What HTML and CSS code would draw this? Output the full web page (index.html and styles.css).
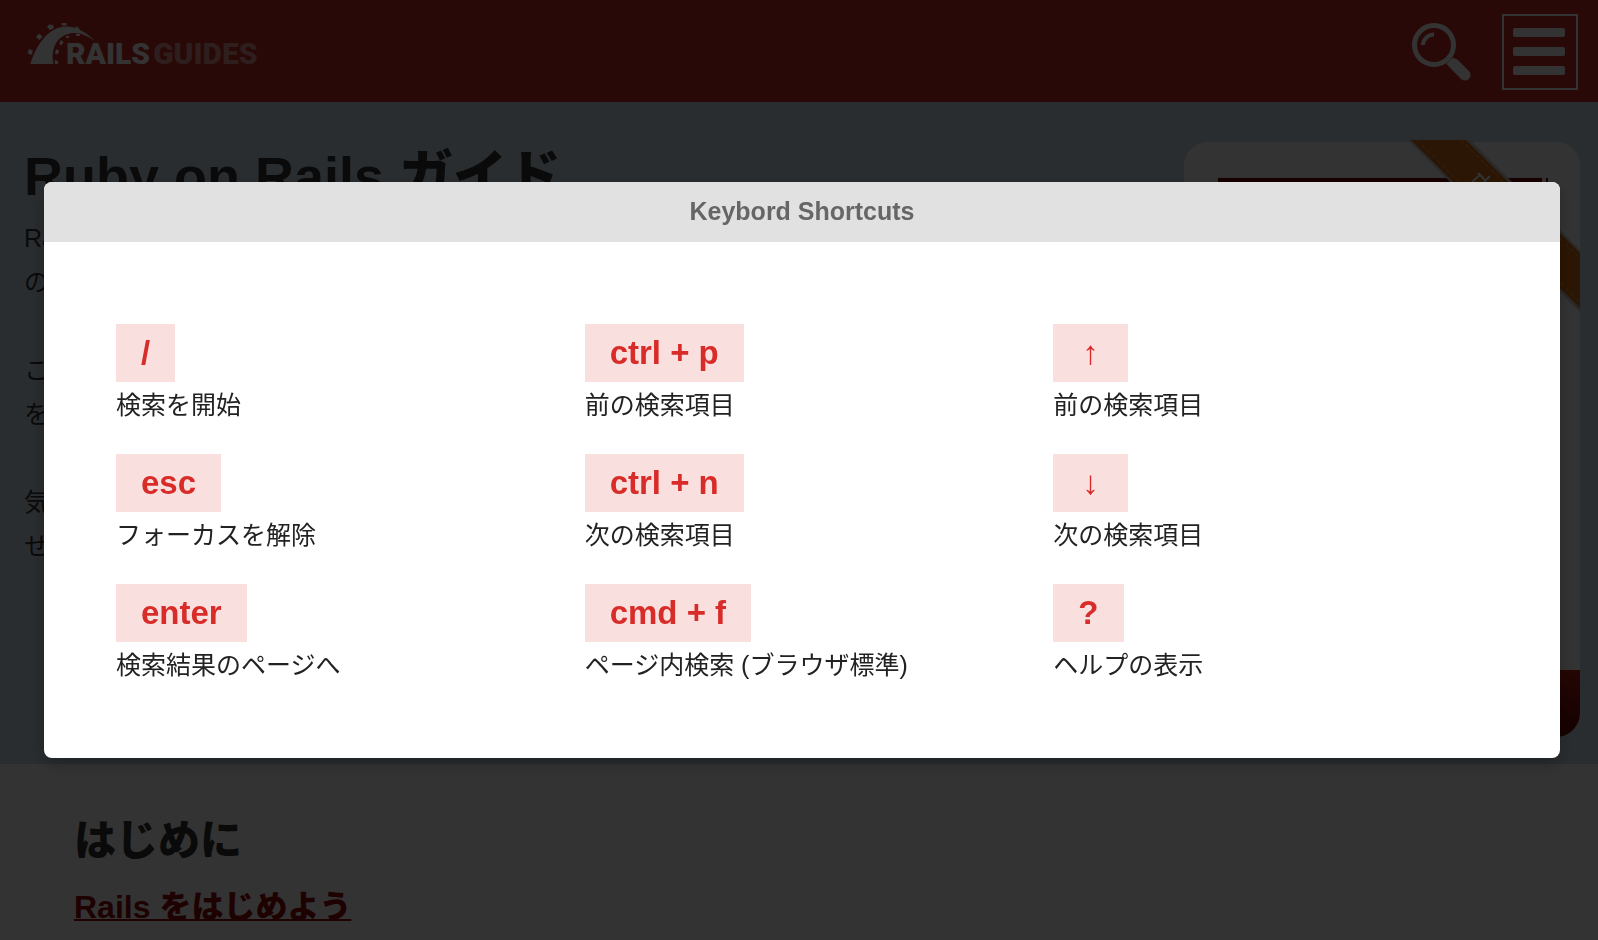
FILE: index.html
```html
<!DOCTYPE html>
<html lang="ja">
<head>
<meta charset="utf-8">
<meta name="viewport" content="width=device-width, initial-scale=1">
<title>Ruby on Rails ガイド</title>
<link rel="stylesheet" href="styles.css">
</head>
<body>
<header class="site-header">
  <a class="logo" href="#" aria-label="Rails Guides">
    <svg class="logo-mark" viewBox="0 0 72 44" aria-hidden="true">
      <path d="M2.500 42C7 25 20 4.500 38 4.500C50 4.500 60 12 67 19C60 14 52 10.500 45 11C31 12 22 24 25.500 42Z"/>
      <path d="M1 27l4 1.500l-1.500 4.500l-4-1.500zM11 11.500l3.500 3l-3 3.500l-3.500-3zM21 2.500l4 .5l1 3l-4 2l-3-3zM34 1h4.500v2.500h-5zM48 4l4 3l-1.500 1.500l-3-2.500zM48 12h4v2h-4zM39 13.500l2.500 1l-1.500 2l-2.500-1.500zM33 18l2.500 2l-2 3.500l-2.500-2zM28 27l3.500 2l-2 3.500l-2.500-1zM26.500 38l3.500 1v3h-3z"/>
    </svg>
    <span class="logo-rails">RAILS</span><span class="logo-guides">GUIDES</span>
  </a>
  <div class="header-tools">
    <button class="search-button" type="button" aria-label="検索">
      <svg viewBox="0 0 60 60" aria-hidden="true">
        <circle cx="23" cy="23" r="19.500"/>
        <path class="glint" d="M12 23A11 11 0 0 1 23 12.500"/>
        <path class="handle" d="M43 42L54 53"/>
        <path d="M37 43.500L44 37"/>
      </svg>
    </button>
    <button class="menu-button" type="button" aria-label="メニュー">
      <span></span><span></span><span></span>
    </button>
  </div>
</header>

<section class="feature">
  <div class="intro">
    <h1>Ruby on Rails ガイド</h1>
    <p>Ra<br>の</p>
    <p>こ<br>を</p>
    <p>気<br>せ</p>
  </div>
  <div class="book" aria-hidden="true">
    <svg class="ribbon" viewBox="0 0 172 172">
      <path class="ribbon-shade" d="M0 0H62L172 110V172Z"/>
      <path class="ribbon-band" d="M3 0H58L172 113V168Z"/>
      <path class="ribbon-stitch" d="M9 0L172 162M53 0L172 118"/>
      <path class="ribbon-print" d="M64 42l9-8M70 33l8 8M76 42l6-6"/>
    </svg>
    <div class="book-cover"><span></span><span></span></div>
    <div class="book-foot"></div>
  </div>
</section>

<main class="chapters">
  <h2>はじめに</h2>
  <a href="#">Rails をはじめよう</a>
</main>

<div class="overlay">
  <div class="dialog" role="dialog" aria-modal="true" aria-labelledby="dialog-title">
    <h2 class="dialog-title" id="dialog-title">Keybord Shortcuts</h2>
    <div class="shortcuts">
      <div class="shortcut"><kbd>/</kbd><p>検索を開始</p></div>
      <div class="shortcut"><kbd>ctrl + p</kbd><p>前の検索項目</p></div>
      <div class="shortcut"><kbd class="arrow">↑</kbd><p>前の検索項目</p></div>
      <div class="shortcut"><kbd>esc</kbd><p>フォーカスを解除</p></div>
      <div class="shortcut"><kbd>ctrl + n</kbd><p>次の検索項目</p></div>
      <div class="shortcut"><kbd class="arrow">↓</kbd><p>次の検索項目</p></div>
      <div class="shortcut"><kbd>enter</kbd><p>検索結果のページへ</p></div>
      <div class="shortcut"><kbd>cmd + f</kbd><p>ページ内検索 (ブラウザ標準)</p></div>
      <div class="shortcut"><kbd>?</kbd><p>ヘルプの表示</p></div>
    </div>
  </div>
</div>
</body>
</html>
```
FILE: styles.css
```css
* { box-sizing: border-box; }

body {
  margin: 0;
  min-height: 100vh;
  overflow: hidden;
  background: #fff;
  color: #333;
  font-family: "Liberation Sans", "Noto Sans CJK JP", sans-serif;
  font-size: 25px;
  line-height: 44px;
}

h1, h2, p { margin: 0; }

button { margin: 0; background: none; color: inherit; font: inherit; cursor: pointer; }

.site-header {
  display: flex;
  justify-content: space-between;
  align-items: flex-start;
  height: 102px;
  padding: 14px 20px 0 28px;
  background: #c52f24;
}

.logo {
  display: flex;
  align-items: flex-end;
  padding-top: 8px;
  font-family: Roboto, sans-serif;
  font-size: 30px;
  font-weight: 900;
  line-height: 24px;
  text-decoration: none;
}
.logo-mark { width: 72px; height: 44px; margin-right: -34px; overflow: visible; fill: #fff; }
.logo-rails { color: #fff; }
.logo-guides { margin-left: 3px; color: #e69490; }

.header-tools { display: flex; gap: 31px; }
.search-button { width: 60px; height: 76px; padding: 8px 0; border: 0; }
.search-button svg {
  display: block;
  width: 60px;
  height: 60px;
  fill: none;
  stroke: #fff;
  stroke-width: 5;
}
.search-button .glint { stroke-width: 4; }
.search-button .handle { stroke-width: 11; stroke-linecap: round; }

.menu-button {
  display: flex;
  flex-direction: column;
  justify-content: center;
  gap: 10px;
  width: 76px;
  height: 76px;
  padding: 0 11px 2px 9px;
  border: 2px solid #fff;
}
.menu-button span { height: 9px; border-radius: 2px; background: #fff; }

.feature {
  display: flex;
  justify-content: space-between;
  min-height: 662px;
  padding: 40px 18px 27px 24px;
  background: #cfe0ea;
}
.intro h1 { margin-bottom: 6px; font-size: 54px; font-weight: 900; line-height: 68px; }
.intro p { margin-bottom: 44px; }

.book {
  position: relative;
  display: flex;
  flex-direction: column;
  justify-content: space-between;
  width: 396px;
  border-radius: 24px;
  background: #fff;
}
.book-cover { display: flex; gap: 4px; margin: 36px 32px 0 34px; }
.book-cover span { width: 2px; height: 8px; background: #780a05; }
.book-cover span:first-child { flex: 1; }
.book-foot {
  height: 67px;
  border-radius: 0 0 24px 24px;
  background: linear-gradient(#b42014, #640502);
}
.ribbon { position: absolute; top: -2px; right: 0; width: 172px; height: 172px; }
.ribbon-shade { fill: #ccc; }
.ribbon-band { fill: #d86c14; }
.ribbon-stitch { fill: none; stroke: #f0ae60; stroke-width: 1; stroke-dasharray: 4 3; }
.ribbon-print { fill: none; stroke: #fff; stroke-width: 2; }

.chapters { padding: 47px 74px 0; }
.chapters h2 { margin-bottom: 14px; font-size: 42px; font-weight: 900; line-height: 60px; }
.chapters a {
  color: #980905;
  font-size: 32px;
  font-weight: 900;
  text-decoration-thickness: 2px;
}

.overlay {
  position: fixed;
  inset: 0;
  padding: 182px 38px 0 44px;
  background: rgba(0, 0, 0, .8);
}
.dialog {
  border-radius: 8px;
  overflow: hidden;
  background: #fff;
  color: #222;
  box-shadow: 0 6px 16px rgba(0, 0, 0, .25);
}
.dialog-title {
  padding-bottom: 2px;
  background: #e1e1e1;
  color: #666;
  font-size: 25px;
  line-height: 58px;
  text-align: center;
}
.shortcuts {
  display: grid;
  grid-template-columns: repeat(3, 1fr);
  gap: 26px 0;
  padding: 82px 38px 70px 72px;
}
.shortcut { display: flex; flex-direction: column; align-items: flex-start; line-height: 46px; }
.shortcut kbd {
  padding: 0 25px;
  background: #fadfdf;
  color: #d82c29;
  font-family: "Liberation Sans", "Noto Sans CJK JP", sans-serif;
  font-size: 33px;
  font-weight: bold;
  line-height: 58px;
}
.shortcut .arrow { padding: 0 29px; }
```
